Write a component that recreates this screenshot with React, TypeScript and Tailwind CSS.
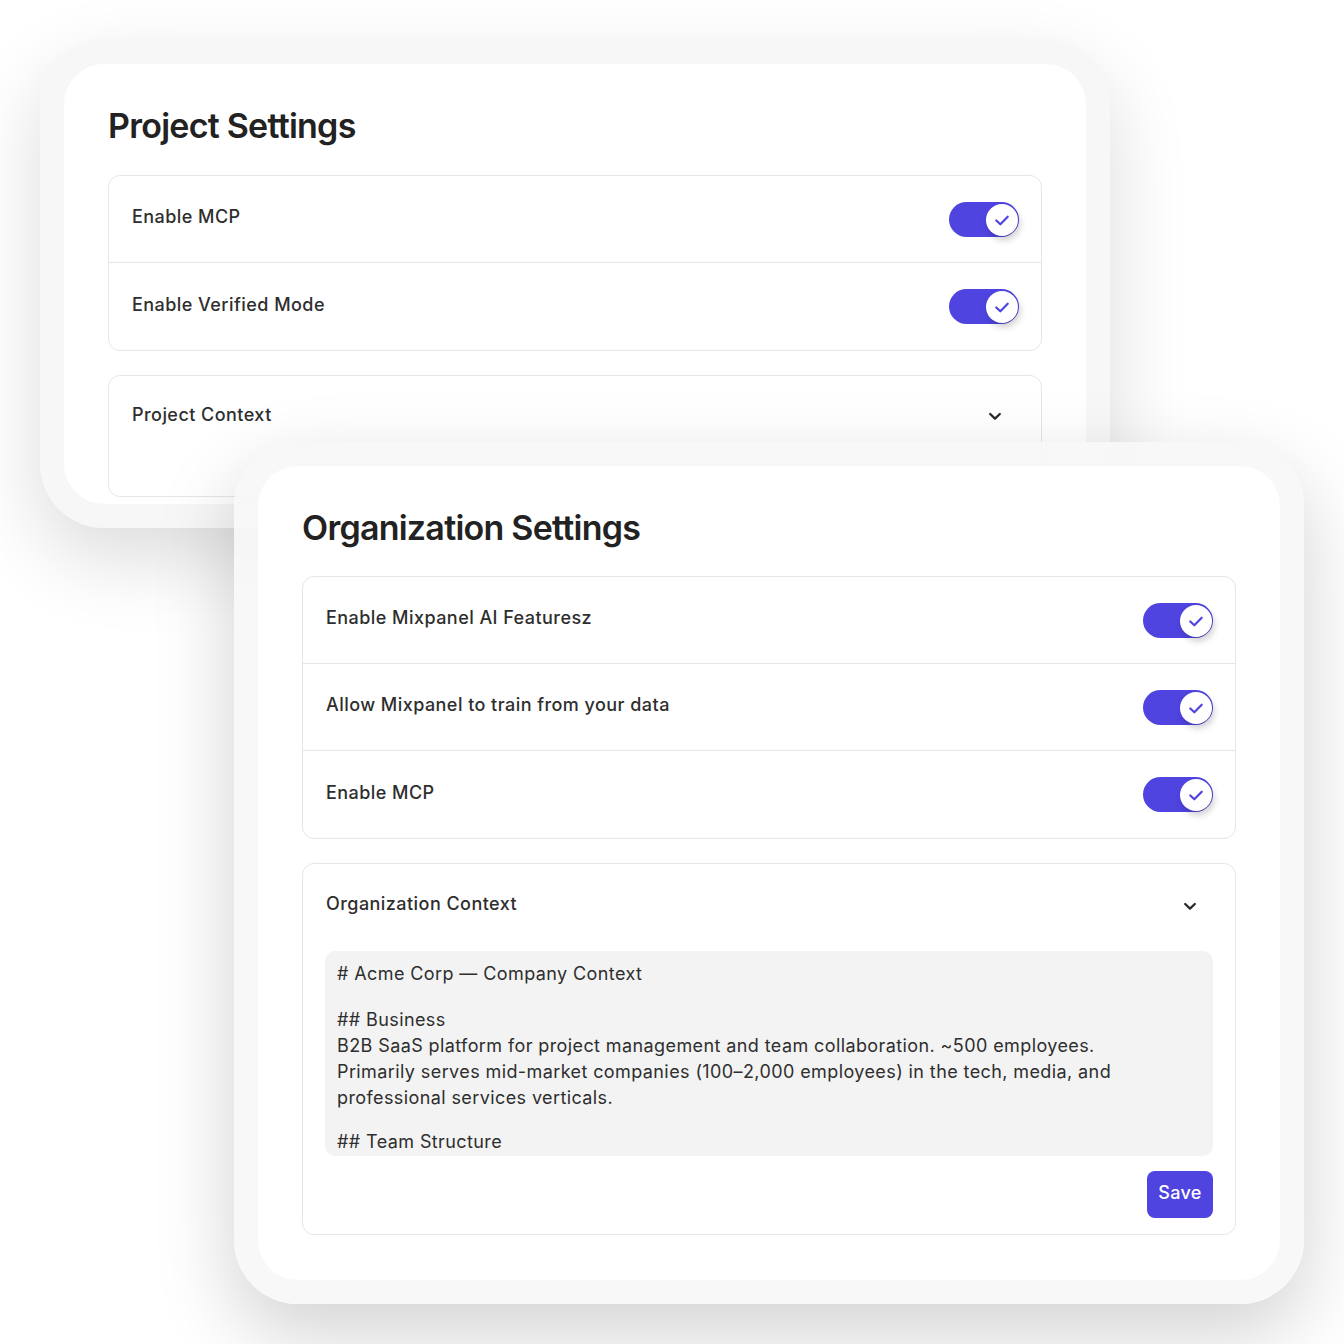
import React from "react";

const font = { fontFamily: "Inter, 'Noto Sans', sans-serif" };

function Toggle() {
  return (
    <div className="relative w-[70px] h-[35px] shrink-0 rounded-full bg-[#4f44e0]">
      <div className="absolute right-[1px] top-[2px] flex h-[32px] w-[32px] items-center justify-center rounded-full bg-white shadow-[2px_4px_7px_rgba(0,0,0,0.2)]">
        <svg width="22" height="22" viewBox="0 0 20 20" fill="none">
          <path d="M4.8 10.4 L8.5 13.9 L15.2 7" stroke="#4f44e0" strokeWidth="2" strokeLinecap="round" strokeLinejoin="round" />
        </svg>
      </div>
    </div>
  );
}

function Chevron() {
  return (
    <svg width="14" height="10" viewBox="0 0 14 10" fill="none" className="mr-[17px]">
      <path d="M2.2 3 L7 7.6 L11.8 3" stroke="#2a2a2a" strokeWidth="2.3" strokeLinecap="round" strokeLinejoin="round" />
    </svg>
  );
}

function Row({ label, last }: { label: string; last?: boolean }) {
  return (
    <div className={`flex h-[87px] items-center justify-between pl-[23px] pr-[22px] ${last ? "" : "border-b border-[#e6e6e6]"}`}>
      <span className="pb-[5px] text-[18px] font-medium tracking-[0.45px] text-[#2e2e2e]">{label}</span>
      <Toggle />
    </div>
  );
}

export default function App() {
  return (
    <div style={font} className="relative h-[1344px] w-[1344px] overflow-hidden bg-white pl-[40px] pt-[40px]">
      {/* Project frame */}
      <div className="relative z-0 h-[488px] w-[1070px] rounded-[64px] bg-[#f7f7f7] p-[24px] shadow-[0_30px_80px_rgba(0,0,0,0.14)]">
        <div className="h-full w-full overflow-hidden rounded-[40px] bg-white px-[44px] pt-[40px]">
          <h1 className="h-[44px] text-[34px] font-semibold leading-[44px] tracking-[-0.75px] text-[#222222]">Project Settings</h1>
          <div className="mt-[27px] rounded-[12px] border border-[#e6e6e6]">
            <Row label="Enable MCP" />
            <Row label="Enable Verified Mode" last />
          </div>
          <div className="mt-[24px] rounded-[12px] border border-[#e6e6e6]">
            <div className="flex h-[80px] items-center justify-between pl-[23px] pr-[22px]">
              <span className="pb-[4px] text-[18px] font-medium tracking-[0.45px] text-[#2e2e2e]">Project Context</span>
              <Chevron />
            </div>
            <div className="h-[40px]" />
          </div>
        </div>
      </div>

      {/* Organization frame */}
      <div className="relative z-10 ml-[194px] mt-[-86px] h-[862px] w-[1070px] rounded-[64px] bg-[#f7f7f7]/90 p-[24px] shadow-[0_30px_80px_rgba(0,0,0,0.18)]">
        <div className="h-full w-full overflow-hidden rounded-[40px] bg-white px-[44px] pt-[40px]">
          <h1 className="h-[44px] text-[34px] font-semibold leading-[44px] tracking-[-0.75px] text-[#222222]">Organization Settings</h1>
          <div className="mt-[26px] rounded-[12px] border border-[#e6e6e6]">
            <Row label="Enable Mixpanel AI Featuresz" />
            <Row label="Allow Mixpanel to train from your data" />
            <Row label="Enable MCP" last />
          </div>
          <div className="mt-[24px] rounded-[12px] border border-[#e6e6e6] px-[22px] pb-[16px]">
            <div className="flex h-[80px] items-center justify-between pl-[1px]">
              <span className="pb-[2px] text-[18px] font-medium tracking-[0.45px] text-[#2e2e2e]">Organization Context</span>
              <div className="mt-[4px] -mr-[1px]"><Chevron /></div>
            </div>
            <div className="mt-[7px] h-[205px] overflow-hidden rounded-[10px] bg-[#f3f3f3] px-[12px] pt-[10px] text-[18px] leading-[26px] tracking-[0.4px] text-[#2e2e2e]">
              <div>#&nbsp;Acme Corp — Company Context</div>
              <div className="mt-[20px]">## Business</div>
              <div className="whitespace-nowrap">B2B SaaS platform for project management and team collaboration. ~500 employees.</div>
              <div className="whitespace-nowrap">Primarily serves mid-market companies (100–2,000 employees) in the tech, media, and</div>
              <div className="whitespace-nowrap">professional services verticals.</div>
              <div className="mt-[18px]">## Team Structure</div>
            </div>
            <div className="mt-[15px] flex justify-end">
              <button className="h-[47px] w-[66px] rounded-[8px] bg-[#4f44e0] pb-[4px] text-[18px] font-medium tracking-[0.3px] text-white">Save</button>
            </div>
          </div>
        </div>
      </div>
    </div>
  );
}
